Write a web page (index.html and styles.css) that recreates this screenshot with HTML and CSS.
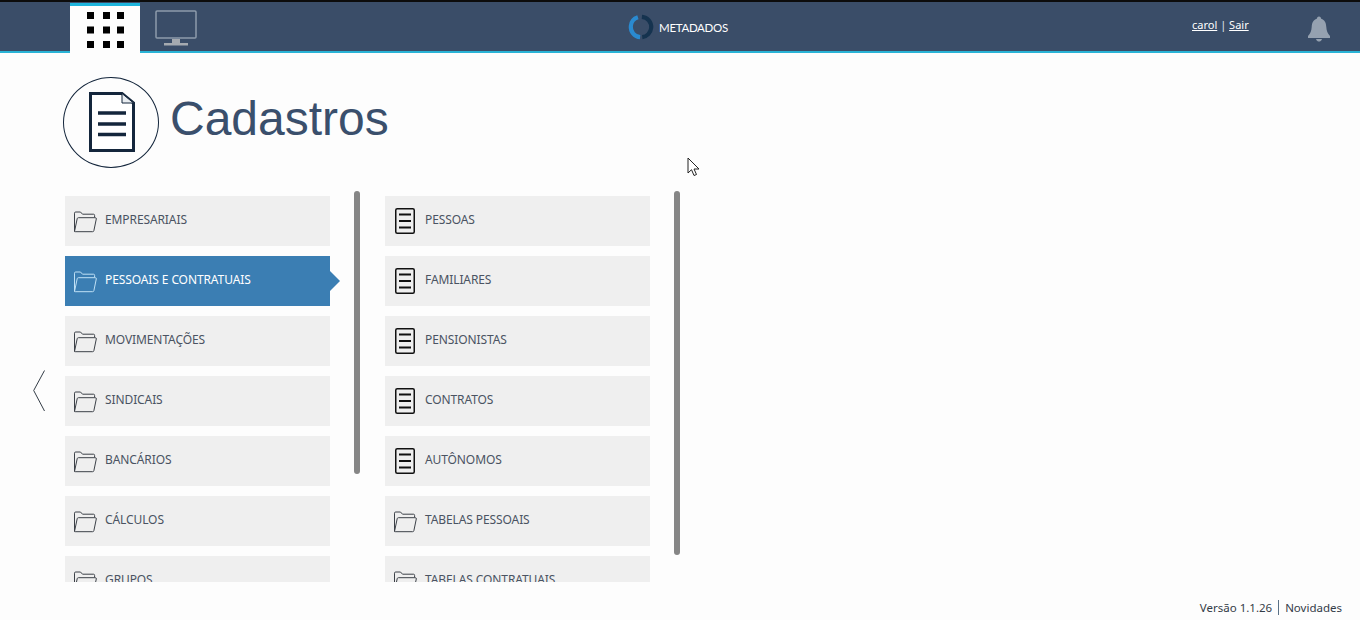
FILE: index.html
```html
<!DOCTYPE html>
<html lang="pt-BR">
<head>
<meta charset="utf-8">
<title>Cadastros</title>
<link rel="stylesheet" href="styles.css">
</head>
<body>
<svg width="0" height="0" class="defs">
  <symbol id="folder" viewBox="0 0 24 22">
    <path d="M1.5 20.5V2.2Q1.5 1 2.7 1H7.5L9.5 3.2H20.5Q21.6 3.2 21.6 4.4V6.2" fill="none" stroke="currentColor" stroke-width="1"/>
    <path d="M1.5 20.5L4.2 7.7Q4.4 6.7 5.4 6.7H22.3Q23.5 6.7 23.3 7.9L20.9 19.6Q20.7 20.7 19.6 20.7H2.2Q1.5 20.7 1.5 20.5Z" fill="none" stroke="currentColor" stroke-width="1"/>
  </symbol>
  <symbol id="doc" viewBox="0 0 20 26">
    <rect x="0.750" y="0.750" width="18.500" height="24.500" rx="1.500" fill="none" stroke="currentColor" stroke-width="1.500"/>
    <path d="M4 6.500H16M4 13H16M4 19.500H16" stroke="currentColor" stroke-width="2"/>
  </symbol>
</svg>

<header class="topbar">
  <nav class="tabs">
    <a class="tab tab-active" href="#">
      <svg class="grid-icon" viewBox="0 0 37 36" width="37" height="36">
        <g fill="#000">
          <rect x="0" y="0" width="7" height="7"/><rect x="16" y="0" width="7" height="7"/><rect x="30" y="0" width="7" height="7"/>
          <rect x="0" y="14.500" width="7" height="7"/><rect x="16" y="14.500" width="7" height="7"/><rect x="30" y="14.500" width="7" height="7"/>
          <rect x="0" y="29" width="7" height="7"/><rect x="16" y="29" width="7" height="7"/><rect x="30" y="29" width="7" height="7"/>
        </g>
      </svg>
    </a>
    <a class="tab tab-monitor" href="#">
      <svg viewBox="0 0 42 36" width="42" height="36">
        <rect x="1" y="1" width="40" height="27" rx="1" fill="none" stroke="#8d9bab" stroke-width="1.500"/>
        <path d="M17 29H25V33H17Z" fill="#a5aab0"/>
        <path d="M9 33H33V35.500H9Z" fill="#a5aab0"/>
      </svg>
    </a>
  </nav>
  <div class="logo">
    <svg viewBox="0 0 28 28" width="26" height="26">
      <circle cx="14" cy="14" r="11" fill="none" stroke="#15334f" stroke-width="4.500" stroke-dasharray="32 38" transform="rotate(-85 14 14)"/>
      <circle cx="14" cy="14" r="11" fill="none" stroke="#2a8ad0" stroke-width="4.500" stroke-dasharray="30 40" transform="rotate(95 14 14)"/>
    </svg>
    <span class="logo-text">METADADOS</span>
  </div>
  <div class="user">
    <a href="#">carol</a> <span class="sep">|</span> <a href="#">Sair</a>
  </div>
  <svg class="bell" viewBox="0 0 24 26" width="24" height="26">
    <path d="M12 0.500C13.500 0.500 14 1.500 14.200 2.800C17.800 3.800 19 7 19.300 11C19.600 15 20.500 17.500 23 20H1C3.500 17.500 4.400 15 4.700 11C5 7 6.200 3.800 9.800 2.800C10 1.500 10.500 0.500 12 0.500Z" fill="#95a1b0"/>
    <rect x="1" y="20" width="22" height="2" fill="#95a1b0"/>
    <path d="M9 23H15C14.500 25 13 25.500 12 25.500C11 25.500 9.500 25 9 23Z" fill="#95a1b0"/>
  </svg>
</header>

<div class="page-title">
  <div class="title-badge">
    <svg viewBox="0 0 46 60" width="46" height="60">
      <path d="M1.500 1.500H33L44.500 11V58.500H1.500Z" fill="#fff" stroke="#14263c" stroke-width="3"/>
      <path d="M33 1.500V11H44.500Z" fill="#e9edf1" stroke="#14263c" stroke-width="1"/>
      <path d="M9 21H37M9 32H37M9 42.500H37" stroke="#14263c" stroke-width="3.500"/>
    </svg>
  </div>
  <h1>Cadastros</h1>
</div>

<main class="browser">
  <div class="back">
    <svg viewBox="0 0 12 42" width="12" height="42"><path d="M11.500 0.500L0.700 20.500L11.500 41" fill="none" stroke="#333c46" stroke-width="1"/></svg>
  </div>

  <section class="column">
    <ul class="list">
      <li class="item"><svg class="ico-folder"><use href="#folder"/></svg><span>EMPRESARIAIS</span></li>
      <li class="item item-active"><svg class="ico-folder"><use href="#folder"/></svg><span>PESSOAIS E CONTRATUAIS</span></li>
      <li class="item"><svg class="ico-folder"><use href="#folder"/></svg><span>MOVIMENTAÇÕES</span></li>
      <li class="item"><svg class="ico-folder"><use href="#folder"/></svg><span>SINDICAIS</span></li>
      <li class="item"><svg class="ico-folder"><use href="#folder"/></svg><span>BANCÁRIOS</span></li>
      <li class="item"><svg class="ico-folder"><use href="#folder"/></svg><span>CÁLCULOS</span></li>
      <li class="item"><svg class="ico-folder"><use href="#folder"/></svg><span>GRUPOS</span></li>
    </ul>
    <div class="thumb thumb-short"></div>
  </section>

  <section class="column">
    <ul class="list">
      <li class="item"><svg class="ico-doc"><use href="#doc"/></svg><span>PESSOAS</span></li>
      <li class="item"><svg class="ico-doc"><use href="#doc"/></svg><span>FAMILIARES</span></li>
      <li class="item"><svg class="ico-doc"><use href="#doc"/></svg><span>PENSIONISTAS</span></li>
      <li class="item"><svg class="ico-doc"><use href="#doc"/></svg><span>CONTRATOS</span></li>
      <li class="item"><svg class="ico-doc"><use href="#doc"/></svg><span>AUTÔNOMOS</span></li>
      <li class="item"><svg class="ico-folder"><use href="#folder"/></svg><span>TABELAS PESSOAIS</span></li>
      <li class="item"><svg class="ico-folder"><use href="#folder"/></svg><span>TABELAS CONTRATUAIS</span></li>
    </ul>
    <div class="thumb thumb-long"></div>
  </section>
</main>

<footer class="footer">
  <span>Versão 1.1.26</span><span class="footer-sep"></span><span>Novidades</span>
</footer>

<svg class="cursor" viewBox="0 0 13 20" width="13" height="20">
  <path d="M1 1V16L4.500 12.700L7 18.500L9.500 17.500L7 12H12Z" fill="#fff" stroke="#222" stroke-width="1"/>
</svg>
</body>
</html>
```

FILE: styles.css
```css
* { box-sizing: border-box; }
html, body { margin: 0; height: 100%; }
body {
  position: relative;
  background: #fdfdfd;
  font-family: "Noto Sans", "Liberation Sans", sans-serif;
  font-size: 12px;
  color: #4a5362;
  overflow: hidden;
  height: 620px;
}
.defs { position: absolute; }

.topbar {
  position: relative;
  height: 53px;
  background: #3a4d68;
  border-top: 2px solid #0c0c0c;
  border-bottom: 2px solid #29b3d6;
  display: flex;
  align-items: flex-start;
  padding-left: 70px;
}
.tabs { display: flex; align-items: flex-start; }
.tab { display: flex; justify-content: center; }
.tab-active {
  width: 70px;
  height: 50px;
  margin-top: 1px;
  background: #fdfdfd;
  border-top: 3px solid #1db4dc;
  padding-top: 6px;
}
.grid-icon { display: block; }
.tab-monitor { margin-left: 15px; margin-top: 8px; }

.logo {
  position: absolute;
  left: 628px;
  top: 12px;
  display: flex;
  align-items: center;
  gap: 5px;
}
.logo-text {
  color: #fff;
  font-family: "Lato", sans-serif;
  font-size: 11.500px;
  letter-spacing: -0.300px;
}
.user {
  position: absolute;
  left: 1192px;
  top: 15px;
  color: #e4e8ed;
  font-size: 11px;
}
.user a { color: #fff; }
.bell { position: absolute; left: 1307px; top: 14px; }

.page-title {
  display: flex;
  align-items: center;
  gap: 11px;
  margin: 23px 0 0 63px;
  height: 92px;
}
.title-badge {
  width: 96px;
  height: 91px;
  padding-left: 1px;
  border: 1.500px solid #14263c;
  border-radius: 50%;
  display: flex;
  align-items: center;
  justify-content: center;
}
.page-title h1 {
  margin: 0 0 6px;
  font-family: "Liberation Sans", Arial, sans-serif;
  font-size: 48px;
  font-weight: 400;
  color: #3a4f6c;
  line-height: 1;
}

.browser {
  display: flex;
  align-items: flex-start;
  margin-top: 23px;
}
.back {
  width: 65px;
  height: 391px;
  padding: 179px 0 0 33px;
}
.back svg { display: block; }
.column {
  display: flex;
  align-items: flex-start;
  gap: 24px;
  margin-right: 25px;
}
.list {
  list-style: none;
  margin: 5px 0 0;
  padding: 0;
  width: 265px;
  height: 386px;
  overflow: hidden;
  display: flex;
  flex-direction: column;
  gap: 10px;
  letter-spacing: -0.100px;
}
.item {
  flex: 0 0 50px;
  position: relative;
  display: flex;
  align-items: center;
  background: #efefef;
  color: #4a5362;
  padding-left: 40px;
}
.item span { position: relative; top: -2px; }
.ico-folder {
  position: absolute;
  left: 8px;
  top: 15px;
  width: 24px;
  height: 22px;
  color: #3c4148;
}
.ico-doc {
  position: absolute;
  left: 10px;
  top: 12px;
  width: 20px;
  height: 26px;
  color: #111;
}
.item-active { background: #3b7eb3; color: #fff; width: 265px; }
.item-active .ico-folder { color: #bfe0f5; }
.item-active::after {
  content: "";
  position: absolute;
  left: 265px;
  top: 15px;
  border-left: 10px solid #3b7eb3;
  border-top: 10px solid transparent;
  border-bottom: 10px solid transparent;
}
.list:has(.item-active) { width: 275px; }
.list:has(.item-active) .item { width: 265px; }
.list:has(.item-active) + .thumb { margin-left: -10px; }
.thumb {
  width: 6px;
  background: #868686;
  border-radius: 3px;
}
.thumb-short { height: 283px; }
.thumb-long { height: 364px; }

.footer {
  position: absolute;
  right: 18px;
  bottom: 5px;
  display: flex;
  align-items: center;
  gap: 6px;
  font-size: 11.500px;
  color: #333b47;
}
.footer-sep {
  width: 1px;
  height: 15px;
  background: #5a7186;
}
.cursor { position: absolute; left: 687px; top: 157px; }
```
